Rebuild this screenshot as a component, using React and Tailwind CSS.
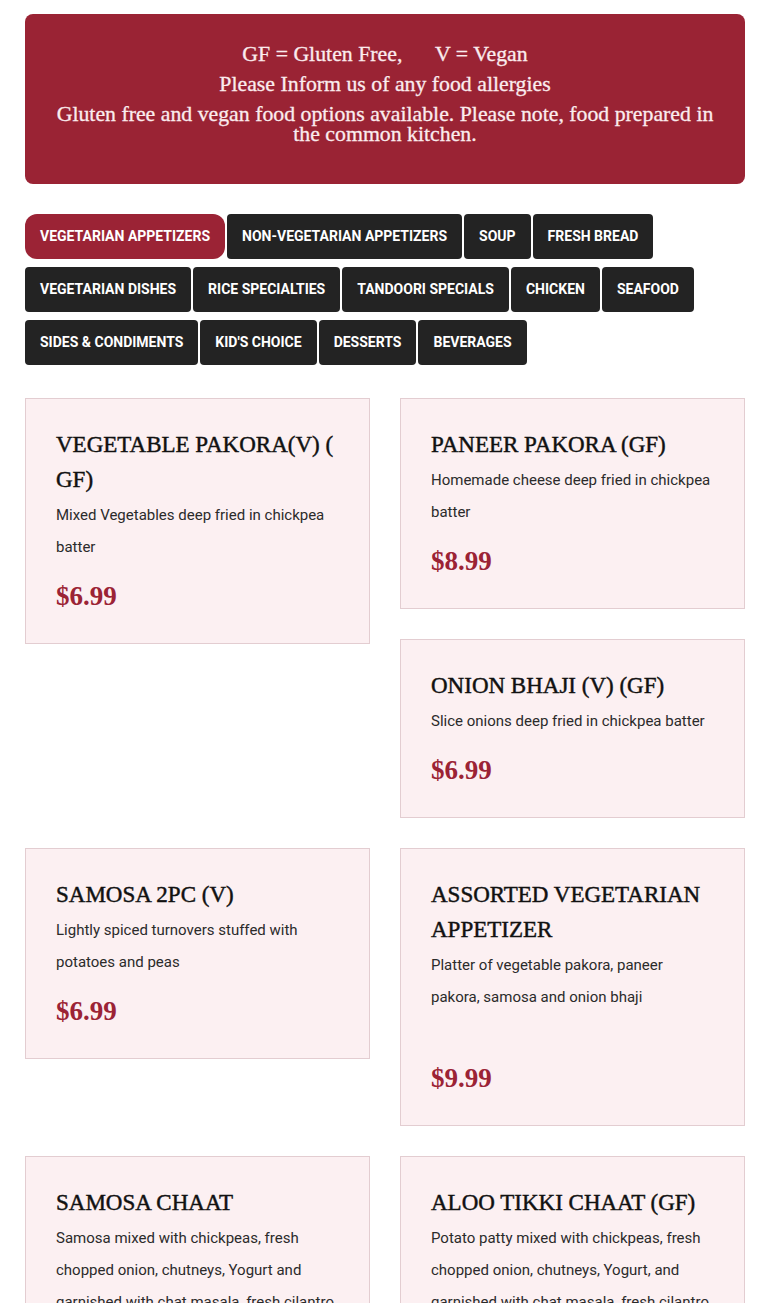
import React from "react";

const tabs = [
  "Vegetarian Appetizers",
  "Non-Vegetarian Appetizers",
  "Soup",
  "Fresh Bread",
  "Vegetarian Dishes",
  "Rice Specialties",
  "Tandoori Specials",
  "Chicken",
  "Seafood",
  "Sides & Condiments",
  "Kid's Choice",
  "Desserts",
  "Beverages",
];

function Card({ title, desc, price, extra }) {
  return (
    <div className="border border-[#e3cdd1] bg-[#fcf0f2] pt-[28px] pb-[31px] pl-[30px] pr-[30px]">
      <h3 className="font-['Liberation_Serif',serif] text-[23px] leading-[35px] text-[#111] uppercase mb-[2px] [-webkit-text-stroke:0.45px_#111]">
        {title}
      </h3>
      <p className="font-['Roboto',sans-serif] text-[15px] leading-[32px] text-[#2b2b2b] mb-[17px]">
        {desc}
        {extra && (
          <>
            <br />
            {"\u00a0"}
          </>
        )}
      </p>
      <div className="font-['Liberation_Serif',serif] font-bold text-[27px] leading-[32px] text-[#9b2335]">
        {price}
      </div>
    </div>
  );
}

export default function App() {
  return (
    <div className="w-[770px] bg-white px-[25px] pt-[14px] pb-[40px]">
      <div className="rounded-[8px] bg-[#9a2334] pt-[30px] pb-[40px] px-[20px] text-center text-[#fbecee] font-['Liberation_Serif',serif] text-[21.8px] leading-[20px] [-webkit-text-stroke:0.3px_#fbecee]">
        <p className="mb-[10px]">
          GF = Gluten Free,{"\u00a0\u00a0\u00a0\u00a0\u00a0\u00a0"}V = Vegan
        </p>
        <p className="mb-[10px]">Please Inform us of any food allergies</p>
        <p>
          Gluten free and vegan food options available. Please note, food prepared in
          <br />
          the common kitchen.
        </p>
      </div>

      <div className="mt-[30px] flex flex-wrap gap-x-[2px] gap-y-[8px]">
        {tabs.map((t, i) => (
          <div
            key={t}
            className={
              i === 0
                ? "h-[45px] px-[15px] flex items-center rounded-[12px] bg-[#9b2335] text-white font-['Roboto',sans-serif] font-bold text-[14px] uppercase"
                : "h-[45px] px-[15px] flex items-center rounded-[4px] bg-[#232323] text-white font-['Roboto',sans-serif] font-bold text-[14px] uppercase"
            }
          >
            {t}
          </div>
        ))}
      </div>

      <div className="mt-[33px] flex flex-col gap-[30px]">
        <div className="grid grid-cols-2 gap-[30px] items-start">
          <Card
            title={
              <>
                Vegetable Pakora(V) (
                <br />
                GF)
              </>
            }
            desc="Mixed Vegetables deep fried in chickpea batter"
            price="$6.99"
          />
          <div className="flex flex-col gap-[30px]">
            <Card
              title="Paneer Pakora (GF)"
              desc="Homemade cheese deep fried in chickpea batter"
              price="$8.99"
            />
            <Card
              title="Onion Bhaji (V) (GF)"
              desc="Slice onions deep fried in chickpea batter"
              price="$6.99"
            />
          </div>
        </div>
        <div className="grid grid-cols-2 gap-[30px] items-start">
          <Card
            title="Samosa 2pc (V)"
            desc="Lightly spiced turnovers stuffed with potatoes and peas"
            price="$6.99"
          />
          <Card
            title="Assorted Vegetarian Appetizer"
            desc="Platter of vegetable pakora, paneer pakora, samosa and onion bhaji"
            price="$9.99"
            extra
          />
        </div>
        <div className="grid grid-cols-2 gap-[30px] items-start">
          <Card
            title="Samosa Chaat"
            desc="Samosa mixed with chickpeas, fresh chopped onion, chutneys, Yogurt and garnished with chat masala, fresh cilantro and sev"
            price="$7.99"
          />
          <Card
            title="Aloo Tikki Chaat (GF)"
            desc="Potato patty mixed with chickpeas, fresh chopped onion, chutneys, Yogurt, and garnished with chat masala,  fresh cilantro and sev"
            price="$7.99"
          />
        </div>
      </div>
    </div>
  );
}
